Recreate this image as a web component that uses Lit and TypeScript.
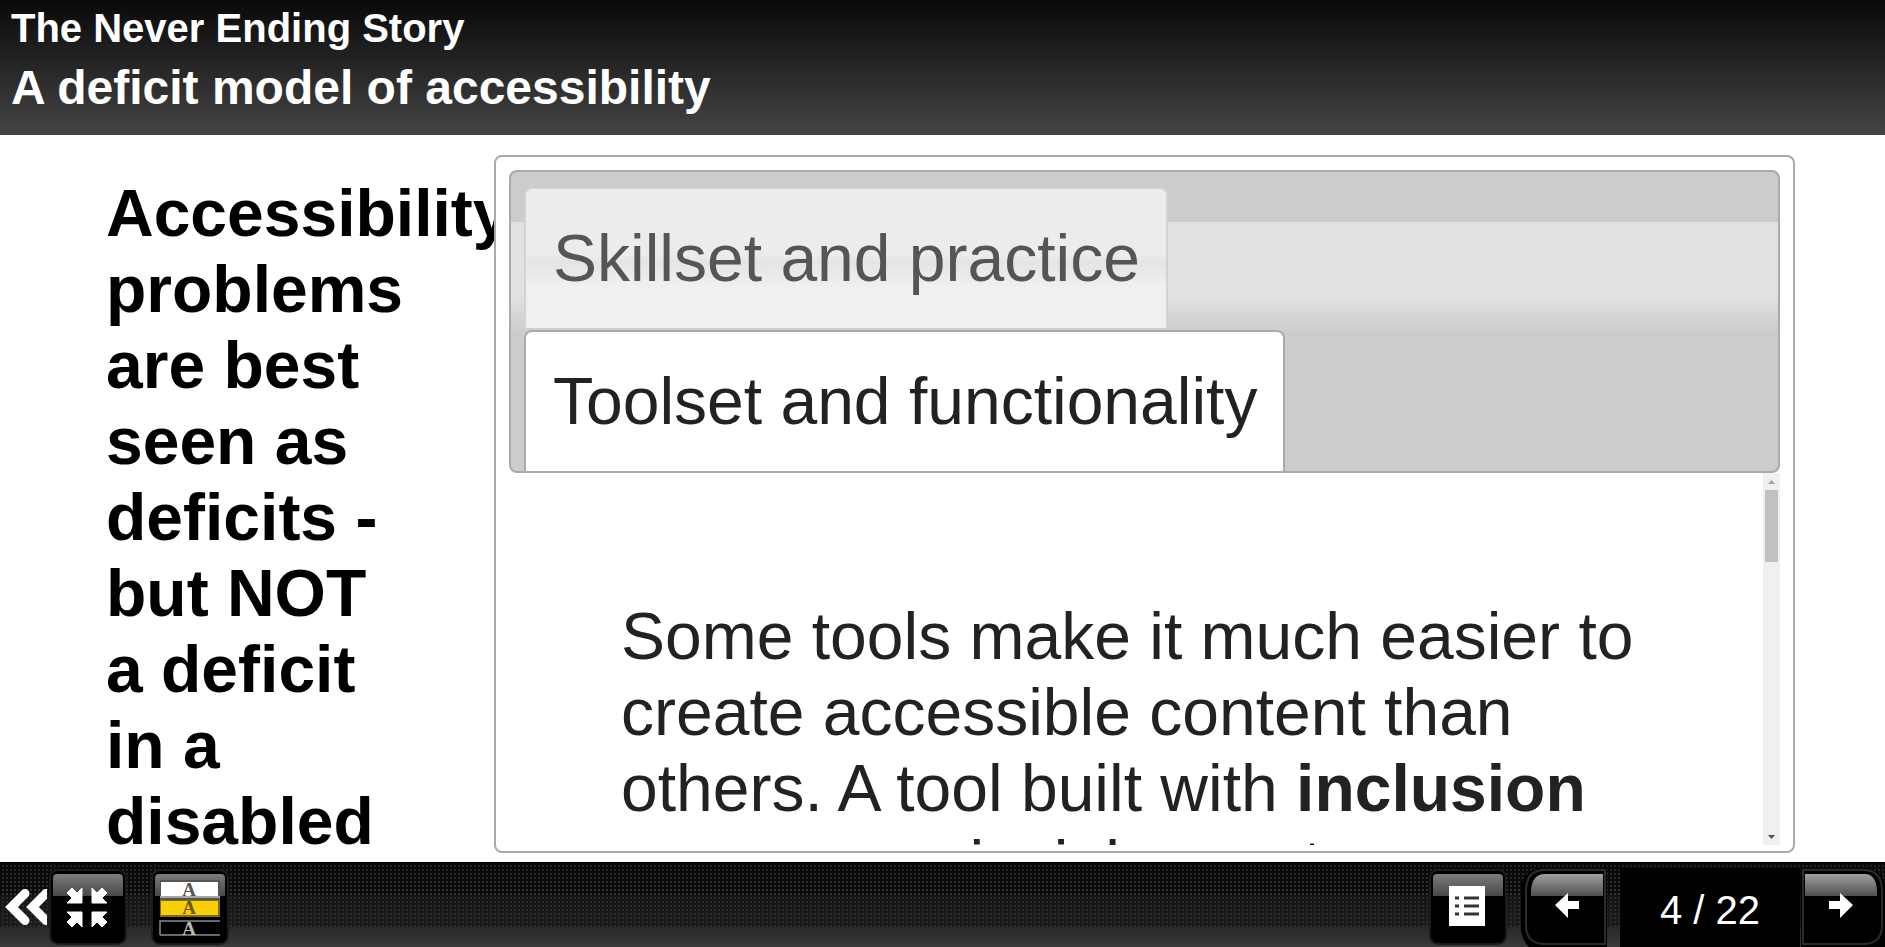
import { LitElement, html, css, svg } from "lit";
import { customElement, state, query } from "lit/decorators.js";
import { classMap } from "lit/directives/class-map.js";

@customElement("page-header")
class PageHeader extends LitElement {
  static styles = css`
    :host { display: block; box-sizing: border-box; padding: 5px 11px 20px;
      background: linear-gradient(#090909, #444); color: #fff; }
    h1, h2 { margin: 0; font-weight: bold; }
    .title { font-size: 40px; line-height: 46px; }
    .subtitle { margin-top: 9px; font-size: 48px; line-height: 55px; }
  `;
  render() {
    return html`
      <h1 class="title">The Never Ending Story</h1>
      <h2 class="subtitle">A deficit model of accessibility</h2>`;
  }
}

@customElement("tab-panel")
class TabPanel extends LitElement {
  @state() selected = 1;
  @query(".scroller") scroller!: HTMLElement;

  static styles = css`
    :host { display: flex; flex-direction: column; box-sizing: border-box; min-width: 0; min-height: 0;
      padding: 13px 13px 6px; border: 2px solid #aaa; border-radius: 8px; background: #fff; color: #222; }
    .tabs { display: flex; flex-direction: column; align-items: flex-start; flex: none;
      padding: 15px 13px 0; border: 2px solid #aaa; border-radius: 8px;
      background: linear-gradient(#ccc 50px, #e1e1e1 50px, #e1e1e1 124px, #ccc 162px); }
    .tab { box-sizing: border-box; margin: 0 0 2px; padding: 31px 26px 32px 27px; border: 2px solid #d3d3d3;
      border-bottom: 0; border-radius: 8px 8px 0 0; font: inherit; font-size: 66px; line-height: 76px;
      color: #555; white-space: nowrap; cursor: pointer;
      background: linear-gradient(#ececec, #ececec 66px, #e4e4e4 73px, #f0f0f0 98px); }
    .tab:last-child { margin-bottom: 0; }
    .tab.on { border-color: #aaa; background: #fff; color: #222; }
    .content { display: flex; flex: 1; min-height: 0; }
    .scroller { flex: 1; min-width: 0; overflow: hidden; box-sizing: border-box; padding: 125px 112px 0; }
    p { margin: 0; font-size: 66px; line-height: 76px; }
    .bar { display: flex; flex-direction: column; flex: none; width: 17px; background: #f0f0f0; }
    .step { display: grid; place-items: center; width: 17px; height: 17px; padding: 0; border: 0; background: none; }
    .track { flex: 1; padding: 0 2px; }
    .thumb { height: 72px; background: #c1c1c1; }
  `;

  private scrollText(by: number) {
    this.scroller.scrollTop += by;
  }

  render() {
    const tabs = ["Skillset and practice", "Toolset and functionality"];
    return html`
      <div class="tabs" role="tablist">
        ${tabs.map((t, i) => html`<button class=${classMap({ tab: true, on: i === this.selected })}
          role="tab" aria-selected=${i === this.selected} @click=${() => (this.selected = i)}>${t}</button>`)}
      </div>
      <div class="content" role="tabpanel">
        <div class="scroller">
          <p>Some tools make it much easier to create accessible content than others. A tool built with
            <b>inclusion</b> as a core principle creates</p>
        </div>
        <div class="bar">
          <button class="step" aria-label="Scroll up" @click=${() => this.scrollText(-76)}>
            <svg width="7" height="4"><path d="M0 4 3.500 0 7 4Z" fill="#a3a3a3" /></svg></button>
          <div class="track"><div class="thumb"></div></div>
          <button class="step" aria-label="Scroll down" @click=${() => this.scrollText(76)}>
            <svg width="7" height="4"><path d="M0 0H7L3.500 4Z" fill="#505050" /></svg></button>
        </div>
      </div>`;
  }
}

/* Arrow pointing from the top left corner to the middle, mirrored for the other three corners. */
const inward = svg`<path d="M33 19V34H18L23 29 18 24 23 19 28 24Z" stroke="#fff" stroke-width="1" stroke-linejoin="round" />`;

const shrinkIcon = svg`<g fill="#fff">
  ${inward}
  <g transform="translate(76 0) scale(-1 1)">${inward}</g>
  <g transform="translate(0 77) scale(1 -1)">${inward}</g>
  <g transform="translate(76 77) scale(-1 -1)">${inward}</g></g>`;

const coloursIcon = svg`
  <rect x="9" y="11" width="60" height="20" fill="#555" />
  <rect x="10" y="13" width="57" height="14" fill="#fff" />
  <rect x="9" y="27" width="60" height="2" fill="#a8a8a8" />
  <rect x="9" y="31" width="60" height="17" fill="#806c10" />
  <rect x="10" y="32" width="57" height="14" fill="#f8d008" />
  <path d="M9 66V52H69M9 66H69" fill="none" stroke="#8a8a8a" stroke-width="1.500" />
  <g class="letters" text-anchor="middle">
    <text x="38" y="27" fill="#555">A</text>
    <text x="38" y="45" fill="#6b5608">A</text>
    <text x="38" y="66" fill="#bbb">A</text></g>`;

const listIcon = svg`
  <rect x="20" y="17" width="36" height="40" fill="#fff" />
  <path d="M26 29H30M35 29H50M26 37H30M35 37H50M26 45H30M35 45H50" stroke="#333" stroke-width="3" />`;

@customElement("page-footer")
class PageFooter extends LitElement {
  static styles = css`
    :host { display: flex; align-items: flex-start; flex: none; height: 85px; border-top: 1px solid #000;
      box-sizing: border-box; color: #fff;
      background-image:
        linear-gradient(transparent 64px, #282828 64px, #3a3a3a 84px),
        linear-gradient(transparent 32px, #1c1c1c88 32px, #28282899 64px, transparent 64px),
        linear-gradient(90deg, #0a0a0a 2px, transparent 2px),
        linear-gradient(#0a0a0a 2px, transparent 2px),
        linear-gradient(#202020, #343434 32px, #343434 64px);
      background-size: auto, auto, 4px 4px, 4px 4px, auto; }
    button { flex: none; display: block; padding: 0; border: 0; background: none; cursor: pointer; }
    svg { display: block; }
    .collapse { margin: 25px 2px 0 5px; }
    .tools { display: flex; flex: 1; gap: 24px; padding-top: 6px; }
    .group { display: flex; }
    .contents { margin: 6px 14px 0 0; }
    .prev { margin: 6px 13px 0 0; }
    .next { margin-top: 6px; }
    .count { box-sizing: border-box; width: 180px; height: 79px; margin: 5px 1px 0 0; padding: 19px 0; background: #000;
      font-size: 40px; line-height: 46px; text-align: center; }
    .letters { font: bold 19px "Liberation Serif", "Times New Roman", serif; }
  `;

  private key(body: unknown) {
    return html`<svg width="78" height="78" viewBox="0 0 78 78">
      <defs><linearGradient id="shine" x1="0" y1="0" x2="0" y2="1">
        <stop offset="0" stop-color="#7c7c7c" /><stop offset="1" stop-color="#484848" /></linearGradient></defs>
      <rect x="1" y="1" width="76" height="74" rx="8" fill="#000" stroke="#1c1c1c" stroke-width="2" />
      <path d="M4 27V9Q4 5 8 5H70Q74 5 74 9V27Z" fill="url(#shine)" />
      ${body}</svg>`;
  }

  private prevKey() {
    return html`<svg width="86" height="78" viewBox="0 0 86 78">
      <defs><linearGradient id="gloss" x1="0" y1="0" x2="0" y2="1">
        <stop offset="0" stop-color="#a0a0a0" /><stop offset="1" stop-color="#505050" /></linearGradient></defs>
      <path d="M86 0H22Q0 0 0 22V58Q0 70 8 78H86Z" fill="#000" />
      <path d="M84 1V75H24Q5 75 5 56V22Q5 1 24 1Z" fill="#000" stroke="#2c2c2c" stroke-width="2" />
      <path d="M10 27V22Q11 5 24 5H82V27Z" fill="url(#gloss)" />
      <path d="M34 36 47 24V32H58V40H47V49Z" fill="#fff" /></svg>`;
  }

  private nextKey() {
    return html`<svg width="84" height="78" viewBox="0 0 84 78">
      <path d="M0 0H64Q84 0 84 22V78H0Z" fill="#000" />
      <path d="M2 1V75H62Q81 75 81 56V22Q81 1 62 1Z" fill="#000" stroke="#2c2c2c" stroke-width="2" />
      <path d="M76 27V22Q75 5 64 5H4V27Z" fill="url(#gloss)" />
      <path d="M52 36 39 24V32H28V40H39V49Z" fill="#fff" /></svg>`;
  }

  render() {
    return html`
      <button class="collapse" aria-label="Hide tools"><svg width="42" height="38" viewBox="0 0 42 38">
        <path d="M20 5.500 6.500 19 20 32.500M41 5.500 27.500 19 41 32.500" fill="none" stroke="#fff" stroke-width="9"
          stroke-linecap="round" stroke-linejoin="miter" /></svg></button>
      <div class="tools">
        <button aria-label="Full screen">${this.key(shrinkIcon)}</button>
        <button aria-label="Change colours">${this.key(coloursIcon)}</button>
      </div>
      <div class="group">
        <button class="contents" aria-label="Contents">${this.key(listIcon)}</button>
        <button class="prev" aria-label="Previous page">${this.prevKey()}</button>
        <div class="count">4 / 22</div>
        <button class="next" aria-label="Next page">${this.nextKey()}</button>
      </div>`;
  }
}

@customElement("app-root")
class AppRoot extends LitElement {
  static styles = css`
    :host { display: flex; flex-direction: column; height: 100vh; overflow: hidden; background: #fff;
      font-family: "Liberation Sans", Arial, sans-serif; }
    .stage { display: grid; grid-template: minmax(0, 1fr) / minmax(0, 281fr) minmax(0, 1301fr); flex: 1;
      min-height: 0; gap: 0 107px; padding: 20px 90px 9px 106px; }
    .note { margin: 20px 0 0; color: #000; font-size: 66px; line-height: 76px; font-weight: bold; }
  `;
  render() {
    return html`
      <page-header></page-header>
      <main class="stage">
        <p class="note">Accessibility problems are best seen as deficits - but NOT a deficit in a disabled</p>
        <tab-panel></tab-panel>
      </main>
      <page-footer></page-footer>`;
  }
}
